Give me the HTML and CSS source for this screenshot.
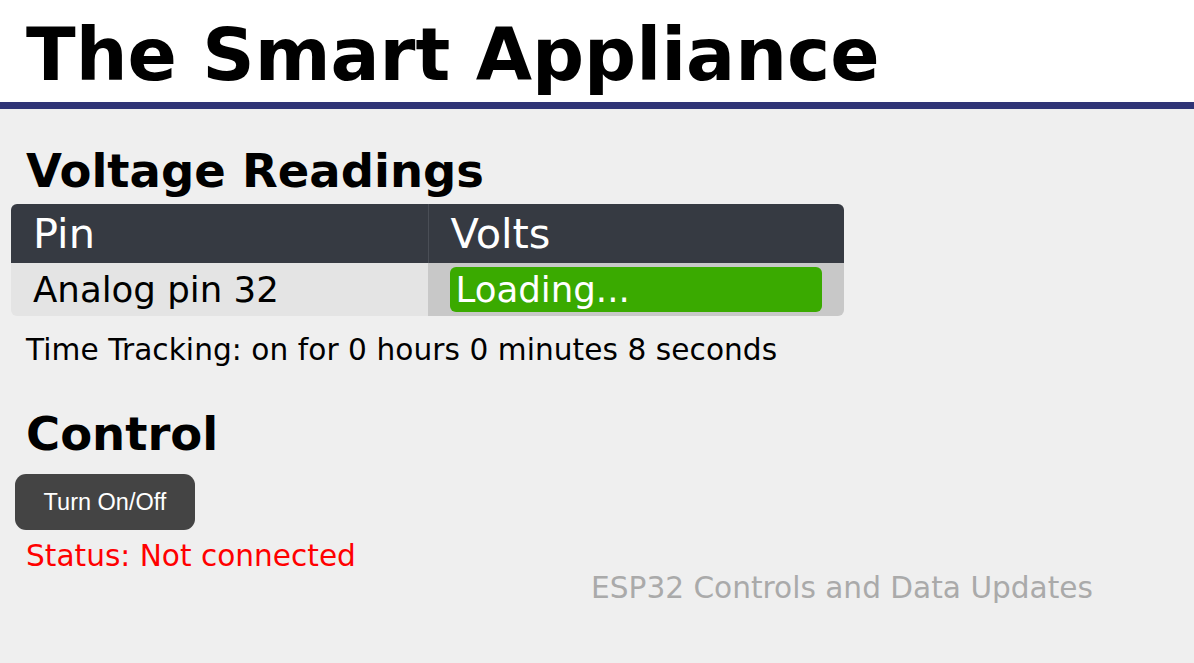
FILE: index.html
```html
<!DOCTYPE html>
<html lang="en">
<head>
<meta charset="utf-8">
<title>The Smart Appliance</title>
<link rel="stylesheet" href="styles.css">
</head>
<body>
<header class="top">
  <h1 class="title">The Smart Appliance</h1>
</header>
<main class="content">
  <h2 class="section-title">Voltage Readings</h2>
  <table class="readings">
    <thead>
      <tr><th class="col-pin">Pin</th><th class="col-volts">Volts</th></tr>
    </thead>
    <tbody>
      <tr><td class="cell-pin">Analog pin 32</td><td class="cell-volts"><span class="value">Loading...</span></td></tr>
    </tbody>
  </table>
  <p class="line time">Time Tracking: on for 0 hours 0 minutes 8 seconds</p>
  <h2 class="section-title control">Control</h2>
  <button class="toggle" type="button">Turn On/Off</button>
  <p class="line status">Status: Not connected</p>
  <p class="line footer-note">ESP32 Controls and Data Updates</p>
</main>
</body>
</html>
```
FILE: styles.css
```css
html, body {
  margin: 0;
  padding: 0;
}
body {
  background: #efefef;
  font-family: "DejaVu Sans", Verdana, sans-serif;
  color: #000;
}
.top {
  background: #fff;
  padding: 13px 0 5px 26px;
  border-bottom: 7px solid #2f3476;
}
.title {
  margin: 0;
  font-size: 72.8px;
  line-height: 84px;
  font-weight: bold;
}
.content {
  padding: 0 0 0 11px;
}
.section-title {
  margin: 34px 0 0 15px;
  font-size: 46.5px;
  line-height: 56px;
  font-weight: bold;
}
.section-title.control {
  margin-top: 41px;
}
.readings {
  margin-top: 5px;
  width: 833px;
  border-collapse: separate;
  border-spacing: 0;
  border-radius: 6px;
  overflow: hidden;
  table-layout: fixed;
}
.readings th {
  background: #363a42;
  color: #fff;
  font-weight: normal;
  font-size: 41.5px;
  text-align: left;
  padding: 5px 22px;
}
.readings .col-volts {
  border-left: 1px solid #4a4e56;
}
.readings td {
  font-size: 35.6px;
  padding: 4px 22px;
}
.cell-pin {
  background: #e4e4e4;
}
.cell-volts {
  background: #c8c8c8;
}
.value {
  display: block;
  background: #3aaa00;
  color: #fff;
  padding: 2px 6px;
  border-radius: 6px;
}
.line {
  font-size: 29.6px;
  line-height: 30px;
  margin: 0 0 0 15px;
}
.time {
  margin-top: 19px;
  letter-spacing: 0.06px;
}
.toggle {
  display: block;
  margin: 12px 0 0 4px;
  width: 180px;
  height: 56px;
  border: none;
  border-radius: 11px;
  background: #444;
  color: #fff;
  font-family: "Liberation Sans", Arial, sans-serif;
  font-size: 23.5px;
}
.status {
  margin-top: 11px;
  color: #ff0000;
}
.footer-note {
  margin-top: 2px;
  color: #aaa;
  text-align: right;
  padding-right: 101px;
}
```
